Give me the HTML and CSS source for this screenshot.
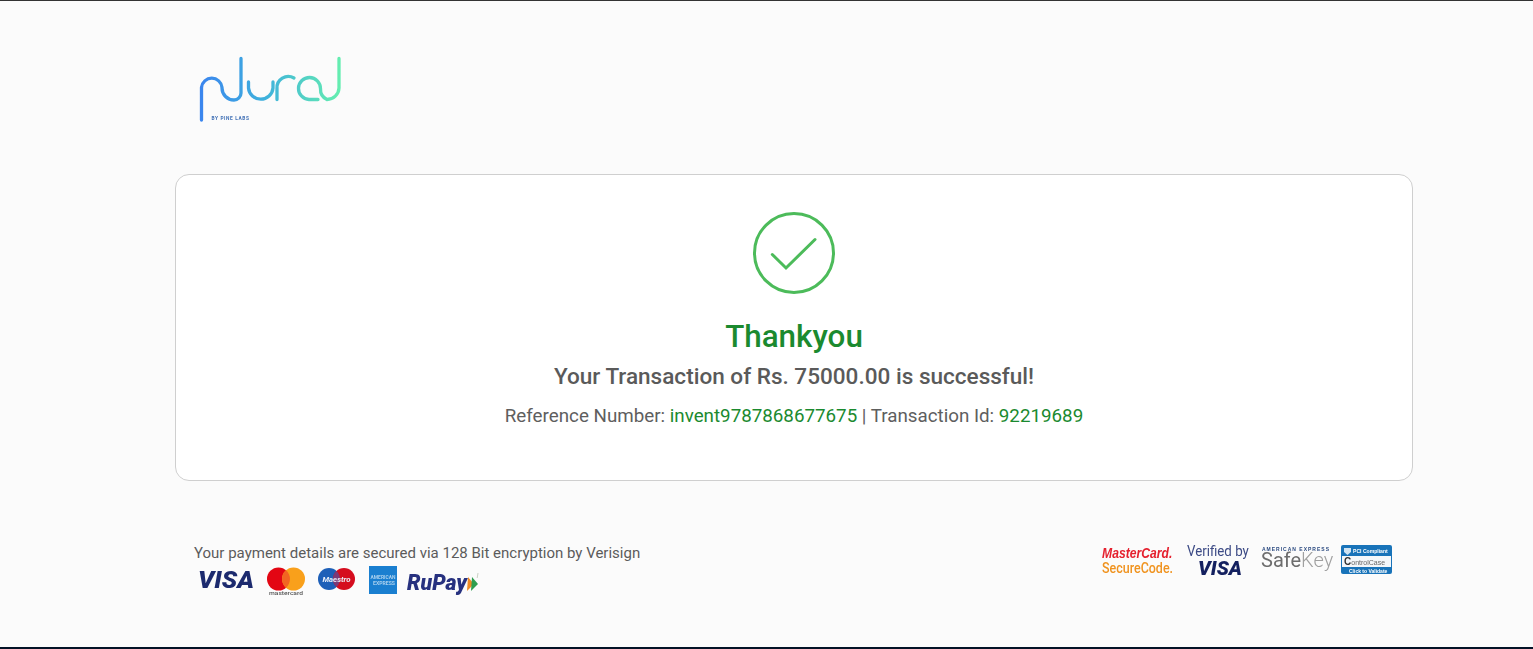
FILE: index.html
```html
<!DOCTYPE html>
<html lang="en">
<head>
<meta charset="utf-8">
<title>Thankyou</title>
<link rel="stylesheet" href="styles.css">
</head>
<body>
<main class="page">
  <header class="brand">
    <svg class="logo" width="150" height="70" viewBox="0 0 150 70" role="img" aria-label="Pural by Pine Labs">
      <defs>
        <linearGradient id="lg" gradientUnits="userSpaceOnUse" x1="0" y1="0" x2="146" y2="0">
          <stop offset="0" stop-color="#3a80f0"/>
          <stop offset="0.5" stop-color="#3fb2dc"/>
          <stop offset="1" stop-color="#64edb0"/>
        </linearGradient>
      </defs>
      <path class="logo-line" d="M8.500 65V32.500A10.300 10.300 0 0 1 29 32.500V33A12 12 0 0 0 41 45 7 7 0 0 0 48 38V3.500"/>
      <path class="logo-line" d="M55.500 27V33A12.300 12.300 0 0 0 80 33V27"/>
      <path class="logo-line" d="M84 44.500V33.500A11.300 11.300 0 0 1 101 23"/>
      <path class="logo-line" d="M125 44.500H116A11 11 0 1 1 127.500 33.500A11.500 11.500 0 0 0 134 44.500A12 12 0 0 0 146 33V3.500"/>
      <text class="logo-sub" x="18.500" y="64.500">BY PINE LABS</text>
    </svg>
  </header>

  <section class="card">
    <svg class="check" width="84" height="84" viewBox="0 0 84 84" role="img" aria-label="Success">
      <circle cx="42" cy="42" r="39.500" class="check-ring"/>
      <path d="M20.300 43.500L34 57 63 28.500" class="check-tick"/>
    </svg>
    <h1 class="title">Thankyou</h1>
    <h2 class="subtitle">Your Transaction of Rs. 75000.00 is successful!</h2>
    <p class="meta">Reference Number: <span class="hl">invent9787868677675</span> | Transaction Id: <span class="hl">92219689</span></p>
  </section>

  <footer class="foot">
    <div class="foot-left">
      <p class="secure">Your payment details are secured via 128 Bit encryption by Verisign</p>
      <div class="marks">
        <svg width="56" height="32" viewBox="0 0 56 32" role="img" aria-label="Visa"><text class="visa" x="0" y="22.500" textLength="56" lengthAdjust="spacingAndGlyphs">VISA</text></svg>
        <svg width="38" height="32" viewBox="0 0 38 32" role="img" aria-label="Mastercard">
          <circle cx="11.500" cy="14" r="11.500" fill="#e30613"/><circle cx="26.500" cy="14" r="11.500" fill="#f9a01b"/>
          <path d="M19 5.300a11.500 11.500 0 0 1 0 17.400a11.500 11.500 0 0 1 0-17.400z" fill="#f26522"/>
          <text class="mc-sub" x="19" y="29.500" text-anchor="middle" textLength="34" lengthAdjust="spacingAndGlyphs">mastercard</text>
        </svg>
        <svg width="38" height="32" viewBox="0 0 38 32" role="img" aria-label="Maestro">
          <circle cx="11" cy="14" r="11" fill="#1d5fb8"/><circle cx="26" cy="14" r="11" fill="#d50d1e"/>
          <path d="M18.500 6a11 11 0 0 1 0 16a11 11 0 0 1 0-16z" fill="#7a3a78"/>
          <text class="mae" x="18.500" y="16.500" text-anchor="middle" textLength="28" lengthAdjust="spacingAndGlyphs">Maestro</text>
        </svg>
        <svg width="28" height="32" viewBox="0 0 28 32" role="img" aria-label="American Express">
          <rect y="1" width="28" height="28" fill="#1a7fd0"/>
          <text class="amex" x="14" y="13.500" text-anchor="middle" textLength="25" lengthAdjust="spacingAndGlyphs">AMERICAN</text>
          <text class="amex" x="15" y="20" text-anchor="middle" textLength="22" lengthAdjust="spacingAndGlyphs">EXPRESS</text>
        </svg>
        <svg class="rupay-mark" width="74" height="32" viewBox="0 0 74 32" role="img" aria-label="RuPay">
          <text class="rupay" x="0" y="25" textLength="60" lengthAdjust="spacingAndGlyphs">RuPay</text>
          <path d="M61 12l6 7-7 7z" fill="#f08a24"/><path d="M65 12l6 7-7 7z" fill="#2e9e4f"/>
          <path d="M71 8l-.8 5" class="rupay-tick"/>
        </svg>
      </div>
    </div>
    <div class="foot-right">
      <svg class="mark-sc" width="72" height="33" viewBox="0 0 72 33" role="img" aria-label="MasterCard SecureCode">
        <text class="sc-a" transform="translate(0 15) scale(.785 1)">MasterCard.</text>
        <text class="sc-b" transform="translate(0 29.700) scale(.805 1)">SecureCode.</text>
      </svg>
      <svg class="mark-vbv" width="63" height="39" viewBox="0 0 63 39" role="img" aria-label="Verified by Visa">
        <text class="vbv-a" transform="translate(0 15.700) scale(.95 1)">Verified by</text>
        <text class="vbv-b" x="11" y="35" textLength="44" lengthAdjust="spacingAndGlyphs">VISA</text>
      </svg>
      <svg class="mark-sk" width="72" height="33" viewBox="0 0 72 33" role="img" aria-label="American Express SafeKey">
        <text class="sk-a" x="1" y="8" textLength="67" lengthAdjust="spacing">AMERICAN EXPRESS</text>
        <text class="sk-b" x="0" y="24.300"><tspan>Safe</tspan><tspan class="sk-c">Key</tspan></text>
      </svg>
      <svg width="51" height="29" viewBox="0 0 51 29" role="img" aria-label="PCI Compliant ControlCase">
        <rect width="51" height="29" rx="2" fill="#1873b9"/>
        <rect x="1" y="11" width="49" height="11" fill="#f4f7fa"/>
        <path d="M3 3h7v4l-3.500 3L3 7z" fill="#cfe3f2"/>
        <text class="pci-w" transform="translate(12 8) scale(.85 1)">PCI Compliant</text>
        <text class="pci-d" x="3" y="20"><tspan class="pci-big">C</tspan>ontrolCase</text>
        <text class="pci-w pci-small" x="8" y="27.500">Click to Validate</text>
      </svg>
    </div>
  </footer>
</main>
</body>
</html>
```
FILE: styles.css
```css
* { box-sizing: border-box; }
html, body { margin: 0; height: 100%; }
body {
  background: #fbfbfb;
  color: #555;
  font-family: Roboto, "Liberation Sans", sans-serif;
  border-top: 1px solid #333;
  border-bottom: 2px solid #031226;
  overflow: hidden;
}
.page {
  width: 1238px;
  margin-left: 175px;
}
.brand {
  height: 173px;
  padding: 54px 0 0 18px;
}
.logo { display: block; filter: blur(.4px); }
.logo-line {
  fill: none;
  stroke: url(#lg);
  stroke-width: 3.300;
  stroke-linecap: round;
}
.logo-sub {
  font: 700 4.800px Roboto, sans-serif;
  letter-spacing: .6px;
  fill: #3f6fb5;
}
.card {
  height: 307px;
  border: 1px solid #cfcfcf;
  border-radius: 14px;
  background: #fff;
  padding-top: 36px;
  display: flex;
  flex-direction: column;
  align-items: center;
  text-align: center;
}
.check { display: block; }
.check-ring { fill: none; stroke: #4cbb5a; stroke-width: 3; }
.check-tick { fill: none; stroke: #4cbb5a; stroke-width: 3; stroke-linecap: round; }
.title {
  margin: 23px 0 0;
  font-size: 31.400px;
  line-height: 38px;
  font-weight: 500;
  color: #1b8a2f;
}
.subtitle {
  margin: 6px 0 0;
  font-size: 22.550px;
  line-height: 30px;
  font-weight: 500;
  color: #5a5a5a;
}
.meta {
  margin: 10px 0 0;
  font-size: 18.780px;
  line-height: 28px;
  color: #5e5e5e;
}
.hl { color: #1b8a2f; }
.foot {
  display: flex;
  justify-content: space-between;
  align-items: flex-start;
  padding: 62px 21px 0 19px;
}
.secure {
  margin: 0;
  font-size: 15px;
  line-height: 20px;
  color: #5b5b5b;
}
.marks {
  display: flex;
  align-items: flex-start;
  gap: 13px;
  margin: 2px 0 0 4px;
}
.marks svg, .foot-right svg { display: block; flex: none; filter: blur(.35px); }
.rupay-mark { margin-left: -3px; }
.visa {
  font: italic 900 24px Roboto, sans-serif;
  fill: #1c2a6e;
}
.mc-sub { font: 500 6px Roboto, sans-serif; fill: #555; }
.mae { font: italic 700 8px Roboto, sans-serif; fill: #e8eef8; }
.amex { font: 700 5px Roboto, sans-serif; fill: #a9d0ee; }
.rupay { font: italic 900 22px Roboto, sans-serif; fill: #27317f; }
.rupay-tick { fill: none; stroke: #a9b5a0; stroke-width: .6; }
.foot-right {
  display: flex;
  align-items: center;
  gap: 11px;
  margin-top: -3px;
}
.mark-sc { margin-right: 2px; }
.mark-sk { margin-right: -3px; }
.sc-a { font: italic 700 15.500px "Liberation Sans", sans-serif; fill: #e5202e; }
.sc-b { font: 500 15.500px Roboto, sans-serif; fill: #f0931f; }
.vbv-a { font: 400 14px Roboto, sans-serif; fill: #3c4a85; }
.vbv-b { font: italic 900 20px Roboto, sans-serif; fill: #14205f; }
.sk-a { font: 700 5px "Liberation Sans", sans-serif; fill: #2b4a80; }
.sk-b { font: 400 20px Roboto, sans-serif; fill: #6d6d6d; }
.sk-c { font-weight: 300; fill: #a0a0a0; }
.pci-w { font: 700 6px "Liberation Sans", sans-serif; fill: #fff; }
.pci-small { font-size: 5px; }
.pci-d { font: 400 7px "Liberation Sans", sans-serif; fill: #666; }
.pci-big { font-size: 10px; font-weight: 700; fill: #333; }
```
